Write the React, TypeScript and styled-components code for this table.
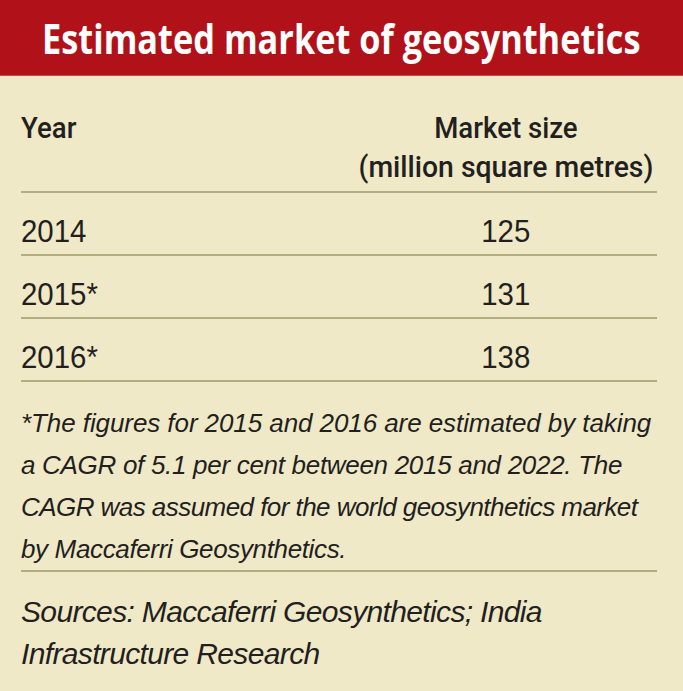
import React from "react";
import styled, { createGlobalStyle } from "styled-components";

const Global = createGlobalStyle`
  html, body { margin: 0; padding: 0; background: #efe9c8; }
  body { width: 683px; height: 691px; overflow: hidden; }
`;

const Card = styled.div`
  width: 683px;
  height: 691px;
  background: #efe9c8;
  color: #231f20;
  font-family: "Liberation Sans", Arial, sans-serif;
  display: flex;
  flex-direction: column;
`;

const Header = styled.header`
  height: 76px;
  flex: none;
  background: #b11118;
  display: flex;
  align-items: center;
  justify-content: center;
  border-bottom: 1px solid #c24a4d;
  box-sizing: border-box;
`;

const Title = styled.h1`
  margin: 0;
  color: #ffffff;
  font-family: "Open Sans", sans-serif;
  font-weight: 700;
  font-size: 42px;
  line-height: normal;
  white-space: nowrap;
  transform: scaleX(0.817);
`;

const Body = styled.div`
  padding: 0 26px 0 21px;
  display: flex;
  flex-direction: column;
`;

const Row = styled.div<{ $head?: boolean }>`
  display: grid;
  grid-template-columns: 1fr 302px;
  border-bottom: 2px solid #b3ad80;
  padding: ${(p) => (p.$head ? "32px 0 5px" : "20px 0 5px")};
  font-family: ${(p) => (p.$head ? '"Roboto", sans-serif' : '"Liberation Sans", sans-serif')};
  font-size: ${(p) => (p.$head ? "30px" : "32px")};
  font-weight: ${(p) => (p.$head ? 500 : 400)};
  line-height: ${(p) => (p.$head ? "39px" : "36px")};
`;

const Cell = styled.div<{ $center?: boolean }>`
  display: flex;
  flex-direction: column;
  align-items: ${(p) => (p.$center ? "center" : "flex-start")};
  white-space: nowrap;
`;

const Squeeze = styled.span<{ $origin?: string; $s?: number }>`
  display: block;
  transform: scaleX(${(p) => p.$s ?? 0.92});
  transform-origin: ${(p) => p.$origin ?? "left"} center;
`;

const Note = styled.p`
  margin: 0;
  padding: 20px 0 0;
  font-style: italic;
  font-size: 26px;
  line-height: 42px;
  white-space: nowrap;
  border-bottom: 2px solid #b3ad80;
`;

const NoteLine = styled.span<{ $ls: number }>`
  display: block;
  letter-spacing: ${(p) => p.$ls}px;
`;

const Sources = styled.p`
  margin: 0;
  padding: 19px 0 0;
  font-style: italic;
  font-size: 30px;
  line-height: 42px;
  letter-spacing: -0.65px;
`;

const rows = [
  ["2014", "125"],
  ["2015*", "131"],
  ["2016*", "138"],
];

const noteLines: [string, number][] = [
  ["*The figures for 2015 and 2016 are estimated by taking", -0.08],
  ["a CAGR of 5.1 per cent between 2015 and 2022. The", -0.3],
  ["CAGR was assumed for the world geosynthetics market", -0.55],
  ["by Maccaferri Geosynthetics.", -0.36],
];

export default function App() {
  return (
    <>
      <Global />
      <Card>
        <Header>
          <Title>Estimated market of geosynthetics</Title>
        </Header>
        <Body>
          <Row $head>
            <Cell>
              <Squeeze>Year</Squeeze>
            </Cell>
            <Cell $center>
              <Squeeze $origin="center">Market size</Squeeze>
              <Squeeze $origin="center" $s={0.945}>
                (million square metres)
              </Squeeze>
            </Cell>
          </Row>
          {rows.map(([y, v]) => (
            <Row key={y}>
              <Cell>
                <Squeeze>{y}</Squeeze>
              </Cell>
              <Cell $center>
                <Squeeze $origin="center">{v}</Squeeze>
              </Cell>
            </Row>
          ))}
          <Note>
            {noteLines.map(([t, ls]) => (
              <NoteLine key={t} $ls={ls}>
                {t}
              </NoteLine>
            ))}
          </Note>
          <Sources>
            Sources: Maccaferri Geosynthetics; India
            <br />
            Infrastructure Research
          </Sources>
        </Body>
      </Card>
    </>
  );
}
